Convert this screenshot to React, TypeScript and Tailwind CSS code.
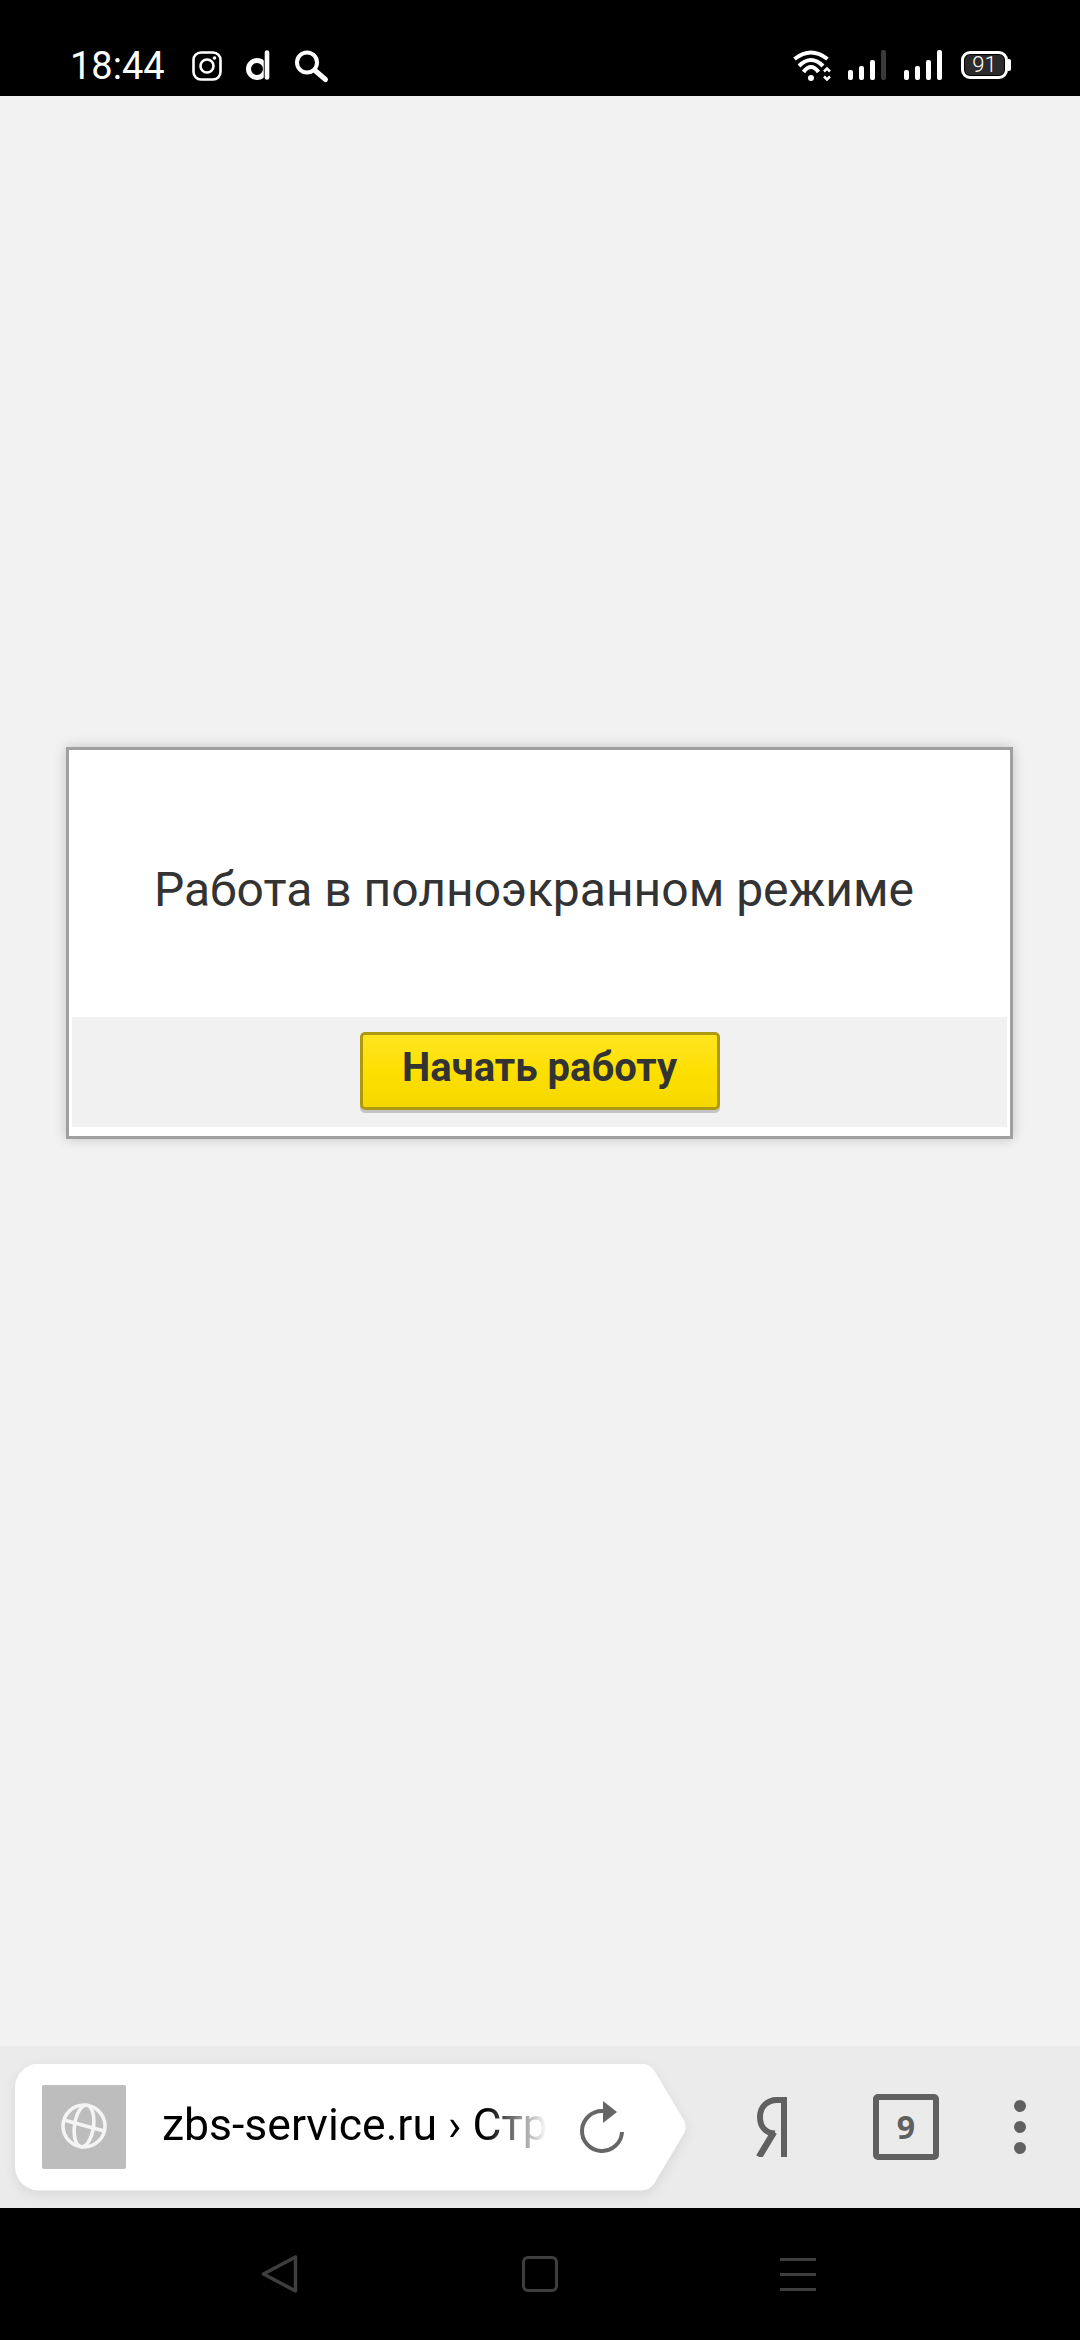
const signalBars = ['h-[10px]', 'h-[14px]', 'h-[20px]', 'h-[30px]']

function SignalIcon({ dimLast }: { dimLast?: boolean }) {
  return (
    <div className="flex items-end gap-[6px] h-[30px]">
      {signalBars.map((height, i) => (
        <div
          key={height}
          className={`w-[5px] rounded-[2px] ${height} ${dimLast && i === 3 ? 'bg-[#3a3a3a]' : 'bg-white'}`}
        />
      ))}
    </div>
  )
}

function StatusBar() {
  return (
    <div className="h-[96px] shrink-0 bg-black text-white flex items-start pt-[50px] pl-[70px]">
      <span className="w-[92px] text-[38px] leading-[32px] font-['Roboto',sans-serif]">18:44</span>
      <svg className="ml-[30px] mt-px" width="30" height="30" viewBox="0 0 30 30" fill="none" stroke="white">
        <rect x="1.5" y="1.5" width="27" height="27" rx="7.5" strokeWidth="2.6" />
        <circle cx="15" cy="15" r="6.5" strokeWidth="2.6" />
        <circle cx="22.5" cy="7" r="1.8" fill="white" stroke="none" />
      </svg>
      <svg className="ml-[24px]" width="24" height="31" viewBox="0 0 24 31" fill="none" stroke="white">
        <circle cx="11" cy="19" r="8.5" strokeWidth="5" />
        <path d="M21 2V29" stroke="black" strokeWidth="6.5" />
        <path d="M21 2.5V27.5" strokeWidth="4.6" strokeLinecap="round" />
      </svg>
      <svg className="ml-[24px]" width="36" height="34" viewBox="0 0 36 34" fill="none" stroke="white">
        <circle cx="13" cy="12.5" r="10" strokeWidth="4" />
        <path d="M21 20.5L31.5 29.5" strokeWidth="5" strokeLinecap="round" />
      </svg>
      <svg className="ml-[462px]" width="42" height="32" viewBox="0 0 42 32" fill="none" stroke="white">
        <path d="M2.5 9Q19 -4 35.5 9" strokeWidth="4" />
        <path d="M7 16Q19 4 31 16" strokeWidth="4" />
        <path d="M11.5 22Q19 12 26.5 22" strokeWidth="4" />
        <circle cx="19" cy="28" r="3" fill="white" stroke="none" />
        <path d="M32 21.5L35 18.5L38 21.5M32 26.5L35 29.5L38 26.5" strokeWidth="2.5" />
      </svg>
      <div className="ml-[14px]">
        <SignalIcon dimLast />
      </div>
      <div className="ml-[18px]">
        <SignalIcon />
      </div>
      <div className="ml-[19px] mt-px flex items-center">
        <div className="w-[47px] h-[28px] rounded-[9px] border-[3px] border-white p-[1px] flex">
          <div className="flex-1 rounded-[5px] bg-[#2b2b2b] flex items-center justify-center text-[22px] leading-none font-light font-['Roboto',sans-serif]">
            91
          </div>
        </div>
        <div className="w-[3px] h-[12px] rounded-r-[2px] bg-white" />
      </div>
    </div>
  )
}

function Dialog() {
  return (
    <div className="ml-[66px] mt-[651px] w-[947px] h-[392px] bg-white border-[3px] border-[#a0a0a0] p-[3px] pb-[9px] flex flex-col shadow-[0_0_12px_rgba(0,0,0,0.2)] font-['Roboto',sans-serif]">
      <div className="flex-1 flex items-center justify-center pt-[10px] pr-[11px]">
        <span className="text-[48px] leading-none text-[#333333]">Работа в полноэкранном режиме</span>
      </div>
      <div className="h-[110px] shrink-0 bg-[#f1f1f1] flex justify-center pt-[15px]">
        <button
          type="button"
          className="w-[360px] h-[78px] pb-[6px] rounded-[5px] border-[3px] border-[#ae9a12] bg-gradient-to-b from-[#ffe51f] via-[#fde000] to-[#f5d800] shadow-[0_3px_0_#c4c4c4] text-[40px] font-bold leading-none text-[#333333]"
        >
          Начать работу
        </button>
      </div>
    </div>
  )
}

function AddressBar() {
  return (
    <div className="drop-shadow-[0_4px_6px_rgba(0,0,0,0.08)]">
      <div className="w-[672px] h-[127px] bg-white flex items-center pl-[27px] [clip-path:path('M24_0H626C633_0_638_4_641_10L669_57C671_61_671_66_669_70L641_117C638_123_633_127_626_127H24C11_127_0_116_0_103V24C0_11_11_0_24_0Z')]">
        <div className="w-[84px] h-[84px] shrink-0 rounded-[2px] bg-[#bdbdbd] flex items-center justify-center">
          <svg className="-mt-[3px]" width="46" height="46" viewBox="0 0 46 46" fill="none" stroke="#f4f4f4" strokeWidth="3.6">
            <circle cx="23" cy="23" r="21" />
            <ellipse cx="23" cy="23" rx="9.5" ry="21" transform="rotate(8 23 23)" />
            <path d="M3 17L43 28" />
          </svg>
        </div>
        <div className="ml-[36px] mb-[3px] w-[385px] shrink-0 whitespace-nowrap text-[44.5px] leading-none text-black font-['Roboto',sans-serif] [mask-image:linear-gradient(to_right,black_84%,transparent)]">
          zbs-service.ru › Стр
        </div>
        <svg className="ml-[28px] shrink-0" width="52" height="58" viewBox="0 0 52 58" fill="none">
          <path d="M28 13A20 20 0 1 0 47 34" stroke="#666666" strokeWidth="4" />
          <path d="M28 3L42 14L28 25Z" fill="#666666" />
        </svg>
      </div>
    </div>
  )
}

function BrowserToolbar() {
  return (
    <div className="h-[162px] shrink-0 bg-[#ebebeb] flex items-center pl-[15px]">
      <AddressBar />
      <svg className="ml-[69px] shrink-0" width="31" height="60" viewBox="0 0 31 60" fill="none" stroke="#606060">
        <path d="M28 60V3H21C11 3 4 10 4 20C4 30 10 36 19 36.5" strokeWidth="6" />
        <path d="M18 35L3 60" strokeWidth="6.5" />
      </svg>
      <div className="ml-[86px] w-[66px] h-[66px] shrink-0 rounded-[5px] border-[6px] border-[#606060] flex items-center justify-center text-[32px] font-bold leading-none text-[#606060] font-['Open_Sans',sans-serif]">
        9
      </div>
      <div className="ml-[75px] w-[12px] shrink-0 flex flex-col gap-[9px]">
        <div className="size-[12px] rounded-full bg-[#606060]" />
        <div className="size-[12px] rounded-full bg-[#606060]" />
        <div className="size-[12px] rounded-full bg-[#606060]" />
      </div>
    </div>
  )
}

function NavBar() {
  return (
    <div className="h-[132px] shrink-0 bg-black flex items-start pt-[46px] pl-[261px]">
      <svg width="37" height="40" viewBox="0 0 37 40" fill="none" stroke="#3e3e3e" strokeWidth="3.5" strokeLinejoin="round">
        <path d="M34.5 3V37L2.5 20Z" />
      </svg>
      <div className="ml-[224px] mt-[2px] w-[36px] h-[36px] rounded-[6px] border-[3px] border-[#3e3e3e]" />
      <div className="ml-[222px] mt-[4px] w-[36px] flex flex-col gap-[12px]">
        <div className="h-[3px] bg-[#3e3e3e]" />
        <div className="h-[3px] bg-[#3e3e3e]" />
        <div className="h-[3px] bg-[#3e3e3e]" />
      </div>
    </div>
  )
}

export default function App() {
  return (
    <div className="w-[1080px] h-[2340px] flex flex-col overflow-hidden bg-[#f2f2f2] font-['Roboto',sans-serif]">
      <StatusBar />
      <div className="flex-1 min-h-0">
        <Dialog />
      </div>
      <BrowserToolbar />
      <NavBar />
    </div>
  )
}
